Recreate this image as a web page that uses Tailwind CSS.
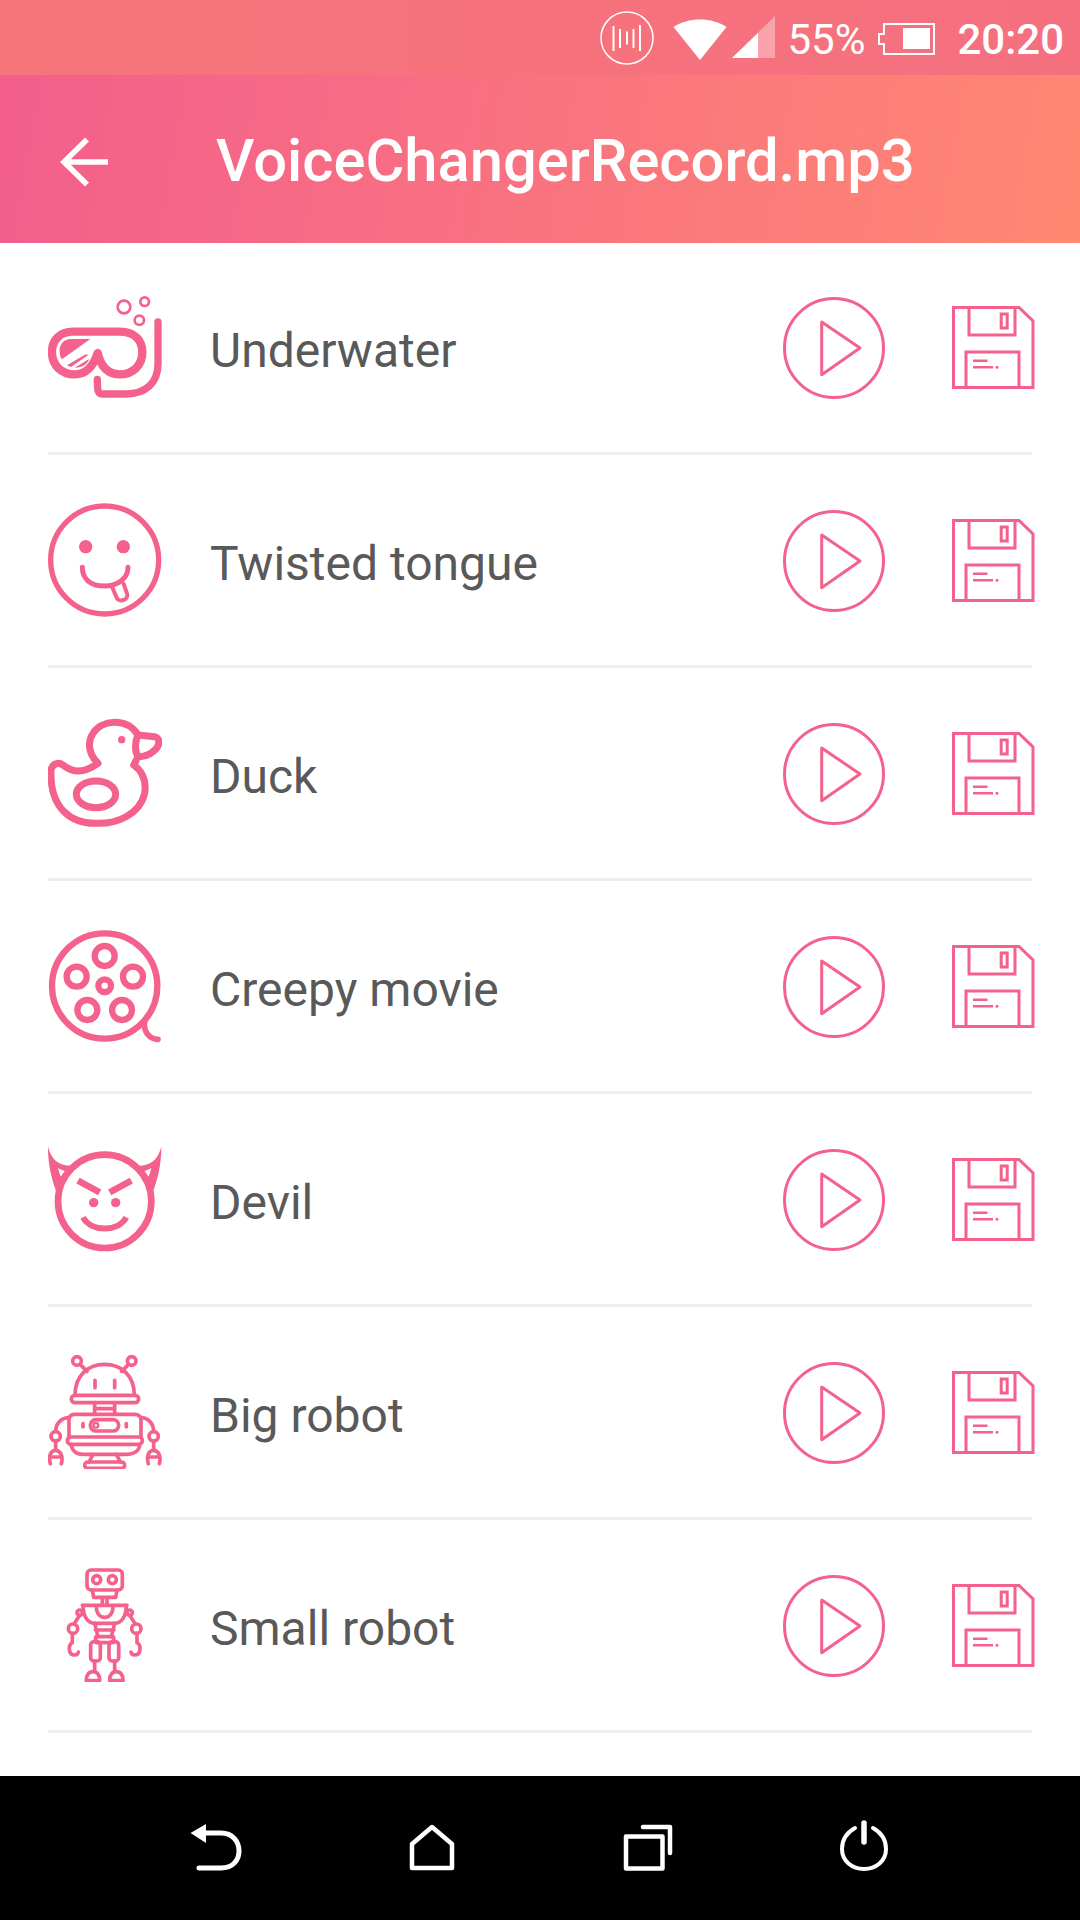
<!DOCTYPE html>
<html lang="en">
<head>
    <meta charset="UTF-8">
    <meta name="viewport" content="width=device-width, initial-scale=1.0">
    <title>Voice Changer</title>
    <script src="https://cdn.jsdelivr.net/npm/@tailwindcss/browser@4"></script>
</head>
<body class="bg-white font-['Roboto',sans-serif]">
<div class="w-[1080px] h-[1920px] flex flex-col overflow-hidden">

    <!-- Status bar -->
    <div class="h-[75px] flex items-center justify-end pr-[16px] text-white bg-linear-to-r/srgb from-[#f6757b] to-[#f5707f]">
        <svg class="w-[54px] h-[54px]" viewBox="0 0 54 54" fill="none" stroke="white">
            <circle cx="27" cy="27" r="26" stroke-width="1.5"/>
            <path d="M13.5 15v25M20 18v19M27 20.500v13M33.500 18v19M40 14v26" stroke-width="2"/>
        </svg>
        <svg class="w-[54px] h-[44px] ml-[19px]" viewBox="0 0 54 44" fill="white">
            <path d="M0.500 11 C15 1 39 1 53.500 11 L27 44 Z"/>
        </svg>
        <svg class="w-[43px] h-[43px] ml-[5px]" viewBox="0 0 43 43" fill="white">
            <path d="M0 42 L43 0 V42 Z" fill-opacity="0.35"/>
            <path d="M0 42 L26 17 V42 Z"/>
        </svg>
        <span class="ml-[12px] text-[42px] leading-none mt-[4px]">55%</span>
        <svg class="w-[57px] h-[32px] ml-[13px] mt-[2px]" viewBox="0 0 57 32" fill="none" stroke="white" stroke-width="2">
            <path d="M6 1H56V31H6V21H1V11H6Z"/>
            <rect x="25" y="5" width="27" height="21" fill="white" stroke="none"/>
        </svg>
        <span class="ml-[22px] text-[42px] leading-none font-medium mt-[4px]">20:20</span>
    </div>

    <!-- Header -->
    <div class="h-[168px] flex items-center text-white bg-[linear-gradient(100deg,#f35e8d,#ff8872)]">
        <svg class="w-[48px] h-[50px] ml-[60px] mt-[6px]" viewBox="0 0 48 50" fill="none" stroke="white" stroke-width="5.500">
            <path d="M48 25H5M27 2.500L4 25L27 47.500"/>
        </svg>
        <h1 class="ml-[108px] mt-[6px] text-[59.700px] font-medium leading-none">VoiceChangerRecord.mp3</h1>
    </div>

    <!-- Effects -->
    <div id="list" class="flex-1 -mt-px pl-[48px] pr-[48px]"></div>

    <!-- Nav bar -->
    <div class="h-[144px] bg-black flex justify-center items-center">
        <div class="w-[216px] flex justify-center">
            <svg class="w-[60px] h-[60px]" viewBox="0 0 60 60" fill="none" stroke="white" stroke-linecap="round" stroke-width="5">
                <path d="M4.500 15L20 6V25Z" fill="white" stroke="none"/>
                <path d="M20 15H35C47 15 53 24 53 33C53 42 47 50 35 50H13"/>
            </svg>
        </div>
        <div class="w-[216px] flex justify-center">
            <svg class="w-[60px] h-[60px]" viewBox="0 0 60 60" fill="none" stroke="white" stroke-linejoin="round" stroke-width="4.500">
                <path d="M30 9L50 26V50H10V26Z"/>
            </svg>
        </div>
        <div class="w-[216px] flex justify-center">
            <svg class="w-[60px] h-[60px]" viewBox="0 0 60 60" fill="none" stroke="white" stroke-linecap="round" stroke-linejoin="round" stroke-width="4.500">
                <rect x="8" y="18.500" width="36.500" height="32"/>
                <path d="M25 9H52V35"/>
            </svg>
        </div>
        <div class="w-[216px] flex justify-center">
            <svg class="w-[60px] h-[60px]" viewBox="0 0 60 60" fill="none" stroke="white" stroke-linecap="round" stroke-width="4">
                <path d="M21 10C12 15 8 23 8 31C8 43 18 51 30 51C42 51 52 43 52 31C52 23 48 15 39 10"/>
                <path d="M30 5V24" stroke-width="5.500"/>
            </svg>
        </div>
    </div>
</div>

<script>
    const effects = [
        { name: 'Underwater', box: '55 29', icon: `
            <path stroke-width="25" d="M130 154H270C315 154 338 180 338 215C338 255 310 282 270 282C240 282 215 265 204 218C190 262 165 282 135 282C95 282 67 255 67 215C67 180 90 154 130 154Z"/>
            <path fill="#f3618c" stroke="none" d="M182 176H125C100 176 88 195 90 215C90 225 93 232 97 237Z"/>
            <path fill="#f3618c" stroke="none" d="M112 255L168 222L176 224L124 260ZM135 262L178 236C175 250 160 262 135 262Z"/>
            <path stroke-width="22" d="M385 125V250C385 310 345 341 290 341H220C205 341 203 335 203 297"/>
            <g stroke-width="8"><circle cx="283" cy="80" r="19"/><circle cx="345" cy="64" r="13"/><circle cx="329" cy="120" r="14"/></g>` },
        { name: 'Twisted tongue', box: '55 669', icon: `
            <circle cx="225" cy="840" r="162" stroke-width="16"/>
            <circle cx="168" cy="800" r="20" fill="#f3618c" stroke="none"/>
            <circle cx="281" cy="800" r="20" fill="#f3618c" stroke="none"/>
            <path stroke-width="15" d="M158 862C158 895 180 918 225 918C265 918 295 895 295 862"/>
            <path stroke-width="12" d="M246 918L262 955C270 968 298 960 292 940L282 912"/>` },
        { name: 'Duck', box: '55 48', icon: `
            <path stroke-width="21" d="M205 190C180 165 170 130 190 100C215 60 290 50 325 105L375 110C395 115 390 140 370 155C355 168 340 170 325 170L312 195C340 215 350 245 345 280C330 345 260 372 200 370C120 372 64 320 64 225C60 190 85 185 100 195C125 215 155 225 205 190Z"/>
            <path stroke-width="21" d="M325 105C315 125 315 155 325 170"/>
            <circle cx="276" cy="119" r="11" fill="#f3618c" stroke="none"/>
            <ellipse cx="199" cy="283" rx="59" ry="40" stroke-width="21"/>` },
        { name: 'Creepy movie', box: '55 687', icon: `
            <g stroke-width="19">
                <circle cx="225" cy="858" r="158"/>
                <circle cx="225" cy="768" r="30"/><circle cx="141" cy="830" r="30"/><circle cx="310" cy="830" r="30"/>
                <circle cx="173" cy="930" r="30"/><circle cx="277" cy="930" r="30"/><circle cx="225" cy="857" r="19"/>
            </g>
            <path stroke-width="17" d="M345 965C340 995 360 1018 385 1018"/>` },
        { name: 'Devil', box: '55 34', icon: `
            <path fill="#f3618c" stroke="none" fill-rule="evenodd" d="M55 48C65 85 85 105 125 105L78 178C65 140 55 100 55 48ZM85 113L106 122L93 138Z"/>
            <path fill="#f3618c" stroke="none" fill-rule="evenodd" d="M395 48C385 85 365 105 325 105L372 178C385 140 395 100 395 48ZM365 113L344 122L357 138Z"/>
            <circle cx="225" cy="212" r="140" stroke-width="20"/>
            <path stroke-width="20" stroke-linecap="butt" d="M145 150L210 185M305 150L240 185"/>
            <circle cx="192" cy="216" r="14" fill="#f3618c" stroke="none"/>
            <circle cx="258" cy="216" r="14" fill="#f3618c" stroke="none"/>
            <path stroke-width="18" stroke-linecap="butt" d="M160 260C185 305 265 305 290 260"/>` },
        { name: 'Big robot', box: '55 44', icon: `
            <g stroke-width="11">
                <circle cx="142" cy="62" r="13"/><circle cx="306" cy="62" r="13"/>
                <path d="M155 76L172 93M293 76L276 93"/>
                <path d="M136 165C136 105 175 72 225 72C275 72 314 105 314 165"/>
                <path d="M196 120V142M255 120V142"/>
                <rect x="125" y="165" width="202" height="22" rx="11"/>
                <path d="M195 187V220M255 187V220M195 205H255"/>
                <path d="M118 290V240C118 228 125 222 135 222H315C328 222 334 230 334 240V290"/>
                <rect x="113" y="290" width="225" height="22" rx="11"/>
                <path d="M125 312C125 330 140 342 160 342H290C315 342 330 330 330 312"/>
                <path d="M190 342L178 365M260 342L272 365"/>
                <rect x="165" y="365" width="120" height="19" rx="9.500"/>
                <rect x="182" y="238" width="85" height="34" rx="17"/>
                <circle cx="199" cy="255" r="7" stroke-width="7"/>
                <path d="M160 250V260M290 250V260"/>
                <path d="M118 232C95 232 78 250 78 273M78 302V328M62 370C55 345 65 330 78 330C90 330 102 345 95 370M65 350H90"/>
                <circle cx="78" cy="288" r="14"/>
                <path d="M334 232C355 232 372 250 372 273M372 302V328M356 370C349 345 359 330 372 330C384 330 396 345 389 370M360 350H385"/>
                <circle cx="372" cy="288" r="14"/>
            </g>` },
        { name: 'Small robot', box: '55 684', icon: `
            <g stroke-width="11">
                <rect x="172" y="690" width="106" height="60" rx="12"/>
                <circle cx="201" cy="719" r="12"/><circle cx="248" cy="719" r="12"/>
                <path d="M188 750L192 772H258L262 750M218 772V795M232 772V795M158 796H292"/>
                <path d="M160 796C160 830 175 850 195 850H255C275 850 290 830 290 796"/>
                <path d="M200 798C200 820 210 832 225 832C240 832 250 820 250 798"/>
                <path d="M195 850L205 890M255 850L245 890M197 870H253"/>
                <rect x="198" y="890" width="54" height="18" rx="4"/>
                <rect x="183" y="905" width="29" height="58" rx="10"/>
                <rect x="238" y="905" width="29" height="58" rx="10"/>
                <path d="M195 963V992M255 963V992"/>
                <path d="M170 1022C170 1002 178 995 190 995C205 995 210 1005 210 1022Z"/>
                <path d="M240 1022C240 1005 245 995 260 995C272 995 280 1002 280 1022Z"/>
                <circle cx="150" cy="818" r="8"/><circle cx="300" cy="818" r="8"/>
                <path d="M150 826L133 852M300 826L317 852"/>
                <circle cx="130" cy="866" r="14"/><circle cx="320" cy="866" r="14"/>
                <path d="M128 880V908C115 915 115 945 135 945C140 945 145 942 146 936"/>
                <path d="M322 880V908C335 915 335 945 315 945C310 945 305 942 304 936"/>
            </g>` },
    ];

    const playIcon = `
        <svg class="w-[104px] h-[104px] mt-[1px]" viewBox="0 0 104 104" fill="none" stroke="#f3618c" stroke-width="3" stroke-linejoin="round">
            <circle cx="52" cy="52" r="49.500"/>
            <path d="M39.700 26L78 52L39.700 78.700Z"/>
        </svg>`;
    const saveIcon = `
        <svg class="w-[83px] h-[83px] ml-[66px] -mr-[3px]" viewBox="0 0 83 83" fill="none" stroke="#f3618c" stroke-width="3">
            <path d="M1.500 1.500H67L81 15V81.500H1.500Z"/>
            <path d="M17 1.500V29H63V1.500"/>
            <rect x="49.200" y="8" width="6" height="14"/>
            <path d="M14 81.500V46H67V81.500"/>
            <path d="M21 54.700H35.500M21 61.300H41" stroke-width="2.500"/>
            <circle cx="45" cy="61.300" r="1.500" fill="#f3618c" stroke="none"/>
        </svg>`;

    const list = document.getElementById('list');
    effects.forEach((fx) => {
        const row = document.createElement('div');
        row.className = 'h-[213px] flex items-center border-b-[3px] border-[#eeeeee]';
        row.innerHTML = `
            <svg class="w-[114px] h-[114px]" viewBox="${fx.box} 342 342" fill="none" stroke="#f3618c" stroke-linecap="round" stroke-linejoin="round">${fx.icon}</svg>
            <span class="ml-[48px] mt-[8px] flex-1 text-[48px] leading-none text-[#595959]">${fx.name}</span>
            ${playIcon}${saveIcon}`;
        list.appendChild(row);
    });
</script>
</body>
</html>
